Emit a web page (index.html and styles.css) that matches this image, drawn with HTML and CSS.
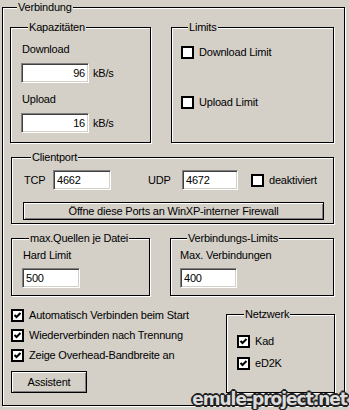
FILE: index.html
```html
<!DOCTYPE html>
<html lang="de">

<head>
    <meta charset="UTF-8">
    <meta name="viewport" content="width=device-width, initial-scale=1.0">
    <title>Verbindung</title>
    <link rel="stylesheet" href="styles.css">
</head>

<body>
    <div class="page">
        <fieldset class="group outer">
            <legend>Verbindung</legend>

            <div class="row row-top">
                <fieldset class="group kap">
                    <legend>Kapazitäten</legend>
                    <div class="label">Download</div>
                    <div class="field-line">
                        <input class="edit num" type="text" value="96">
                        <span class="unit">kB/s</span>
                    </div>
                    <div class="label label-up">Upload</div>
                    <div class="field-line">
                        <input class="edit num" type="text" value="16">
                        <span class="unit">kB/s</span>
                    </div>
                </fieldset>

                <fieldset class="group limits">
                    <legend>Limits</legend>
                    <label class="check">
                        <span class="box"></span>
                        <span>Download Limit</span>
                    </label>
                    <label class="check check-up">
                        <span class="box"></span>
                        <span>Upload Limit</span>
                    </label>
                </fieldset>
            </div>

            <fieldset class="group clientport">
                <legend>Clientport</legend>
                <div class="port-line">
                    <span class="port-label tcp">TCP</span>
                    <input class="edit port" type="text" value="4662">
                    <span class="port-label udp">UDP</span>
                    <input class="edit port udp-input" type="text" value="4672">
                    <label class="check deak">
                        <span class="box"></span>
                        <span>deaktiviert</span>
                    </label>
                </div>
                <button class="btn firewall">Öffne diese Ports an WinXP-interner Firewall</button>
            </fieldset>

            <div class="row row-mid">
                <fieldset class="group quellen">
                    <legend>max.Quellen je Datei</legend>
                    <div class="label">Hard Limit</div>
                    <input class="edit small" type="text" value="500">
                </fieldset>

                <fieldset class="group verb">
                    <legend>Verbindungs-Limits</legend>
                    <div class="label">Max. Verbindungen</div>
                    <input class="edit small" type="text" value="400">
                </fieldset>
            </div>

            <div class="row row-bottom">
                <div class="options">
                    <label class="check opt">
                        <span class="box on"><svg viewBox="0 0 9 9"><path d="M1.5 4 L3.5 6 L7.5 2" /></svg></span>
                        <span>Automatisch Verbinden beim Start</span>
                    </label>
                    <label class="check opt">
                        <span class="box on"><svg viewBox="0 0 9 9"><path d="M1.5 4 L3.5 6 L7.5 2" /></svg></span>
                        <span>Wiederverbinden nach Trennung</span>
                    </label>
                    <label class="check opt">
                        <span class="box on"><svg viewBox="0 0 9 9"><path d="M1.5 4 L3.5 6 L7.5 2" /></svg></span>
                        <span>Zeige Overhead-Bandbreite an</span>
                    </label>
                    <button class="btn assistent">Assistent</button>
                </div>

                <fieldset class="group netzwerk">
                    <legend>Netzwerk</legend>
                    <label class="check">
                        <span class="box on"><svg viewBox="0 0 9 9"><path d="M1.5 4 L3.5 6 L7.5 2" /></svg></span>
                        <span>Kad</span>
                    </label>
                    <label class="check ed2k">
                        <span class="box on"><svg viewBox="0 0 9 9"><path d="M1.5 4 L3.5 6 L7.5 2" /></svg></span>
                        <span>eD2K</span>
                    </label>
                </fieldset>
            </div>
        </fieldset>

        <div class="watermark">emule-project.net</div>
    </div>
</body>

</html>
```

FILE: styles.css
```css
* {
    box-sizing: border-box;
}

body {
    margin: 0;
    padding: 0;
    background-color: #d4d0c8;
    font-family: "Liberation Sans", Arial, sans-serif;
    font-size: 11px;
    line-height: 13px;
    letter-spacing: -0.2px;
    color: #000000;
}

.page {
    position: relative;
    width: 349px;
    height: 410px;
    overflow: hidden;
}

/* etched group boxes: black line with a white line next to it */
.group {
    margin: 0;
    padding: 0;
    min-width: 0;
    border: 1px solid #000000;
    box-shadow: inset 1px 1px 0 #ffffff, 1px 1px 0 #ffffff;
}

.group legend {
    padding: 0 1px;
    margin-left: 7px;
    line-height: 13px;
    background: #d4d0c8;
}

.outer {
    margin: 1px 0 0 2px;
    width: 343px;
    height: 405px;
    padding: 7px 0 0 7px;
}

.row {
    display: flex;
}

/* Kapazitäten / Limits */
.kap {
    width: 141px;
    height: 122px;
    padding: 9px 0 0 10px;
}

.label {
    padding-left: 1px;
}

.label-up {
    margin-top: 10px;
}

.field-line {
    display: flex;
    align-items: center;
    margin-top: 7px;
}

.unit {
    margin-left: 4px;
}

.edit {
    font-family: "Liberation Sans", Arial, sans-serif;
    font-size: 11px;
    letter-spacing: -0.2px;
    height: 20px;
    padding: 0 3px;
    border-style: solid;
    border-width: 1px;
    border-color: #808080 #ffffff #ffffff #808080;
    box-shadow: inset 1px 1px 0 #404040, inset -1px -1px 0 #d4d0c8;
    background: #ffffff;
    color: #000000;
    outline: none;
}

.num {
    width: 68px;
    text-align: right;
}

.limits {
    width: 163px;
    height: 122px;
    margin-left: 20px;
    padding: 12px 0 0 9px;
}

.check {
    display: flex;
    align-items: center;
    gap: 5px;
    height: 13px;
}

.box {
    display: block;
    width: 13px;
    height: 13px;
    border: 2px solid #000000;
    background: #ffffff;
    flex-shrink: 0;
}

.box svg {
    display: block;
    width: 9px;
    height: 9px;
}

.box svg path {
    fill: none;
    stroke: #000000;
    stroke-width: 2;
}

.check-up {
    margin-top: 37px;
}

/* Clientport */
.clientport {
    width: 323px;
    height: 73px;
    margin: 8px 0 0 1px;
    padding: 6px 0 0 12px;
}

.port-line {
    display: flex;
    align-items: center;
    height: 20px;
}

.port-label {
    display: block;
}

.tcp {
    width: 29px;
}

.udp {
    width: 34px;
    margin-left: 37px;
}

.port {
    width: 58px;
}

.udp-input {
    width: 56px;
}

.deak {
    margin-left: 13px;
}

.btn {
    display: block;
    font-family: "Liberation Sans", Arial, sans-serif;
    font-size: 11px;
    letter-spacing: -0.2px;
    color: #000000;
    background: #d4d0c8;
    border: 1px solid #000000;
    box-shadow: inset 1px 1px 0 #ffffff, inset -1px -1px 0 #808080;
    padding: 0;
}

.firewall {
    width: 301px;
    height: 18px;
    margin: 12px 0 0 -1px;
}

/* Quellen / Verbindungs-Limits */
.row-mid {
    margin-top: 8px;
    margin-left: 1px;
}

.quellen {
    width: 139px;
    height: 64px;
    padding: 4px 0 0 10px;
}

.verb {
    width: 164px;
    height: 64px;
    margin-left: 20px;
    padding: 4px 0 0 9px;
}

.verb .label {
    padding-left: 0;
}

.small {
    width: 58px;
    margin-top: 6px;
}

.verb .small {
    width: 57px;
}

/* options + Netzwerk */
.row-bottom {
    margin-top: 12px;
    margin-left: 1px;
}

.options {
    width: 215px;
    padding-top: 1px;
}

.opt {
    margin-bottom: 7px;
}

.assistent {
    width: 76px;
    height: 22px;
    margin-top: 9px;
}

.netzwerk {
    width: 109px;
    height: 85px;
    padding: 14px 0 0 10px;
}

.ed2k {
    margin-top: 9px;
}

.watermark {
    position: absolute;
    right: 2px;
    bottom: 0;
    font-family: "DejaVu Sans", sans-serif;
    font-weight: bold;
    font-size: 17px;
    line-height: 22px;
    letter-spacing: -1px;
    color: #dcdcdc;
    text-shadow: -1px -1px 0 #222, 1px -1px 0 #222, -1px 1px 0 #222, 1px 1px 0 #222,
        0 -2px 0 #222, 0 2px 0 #222, -2px 0 0 #222, 2px 0 0 #222;
}
```
